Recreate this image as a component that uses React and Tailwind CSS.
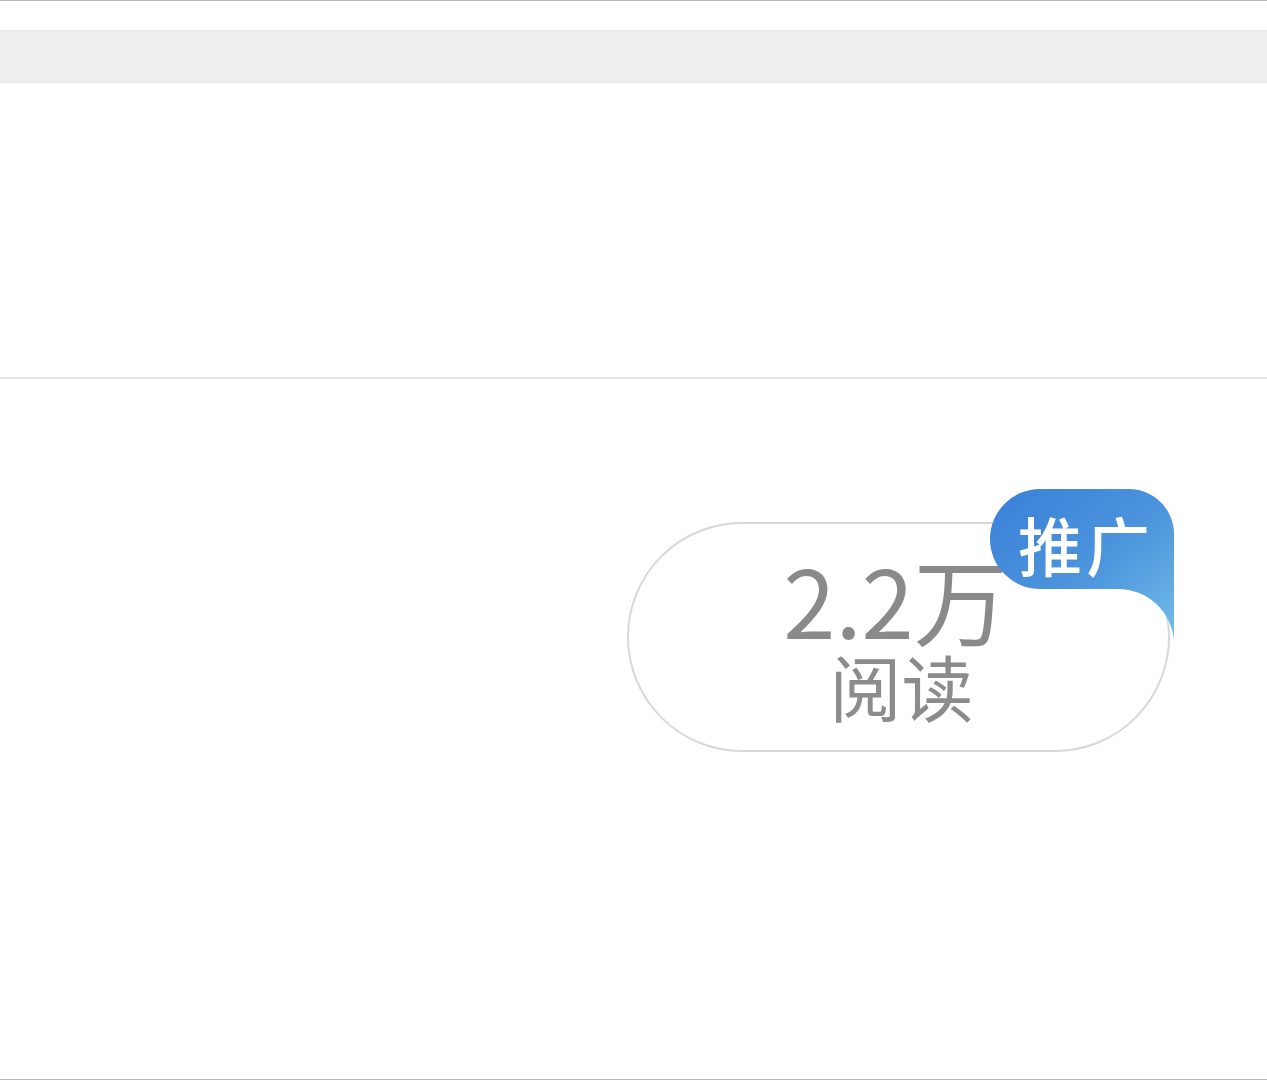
export default function App() {
  return (
    <div
      className="w-full h-[1080px] flex flex-col bg-white border-t border-b border-[#b8b8b8]"
      style={{ fontFamily: '"Noto Sans CJK SC", "Noto Sans", sans-serif' }}
    >
      {/* top spacer + gray band */}
      <div className="h-[29px]" />
      <div className="h-[53px] bg-[#eeeeee] border-t border-b border-[#e8e8e8]" />
      <div className="h-[294px]" />
      <div className="h-[2px] bg-[#e6e6e6]" />

      {/* read count pill */}
      <div className="flex-1 pl-[627px] pt-[143px]">
        <div className="relative w-[543px] h-[230px] rounded-full border-2 border-[#d8d8d8] flex flex-col items-center justify-center pt-[4px]">
          <svg
            className="absolute left-[361px] top-[-35px]"
            width="184"
            height="160"
            viewBox="0 0 184 160"
          >
            <defs>
              <linearGradient id="badge" x1="0" y1="0" x2="1" y2="1">
                <stop offset="0" stopColor="#3a7fd8" />
                <stop offset="0.55" stopColor="#4d95dd" />
                <stop offset="1" stopColor="#72bde8" />
              </linearGradient>
            </defs>
            <path
              d="M 50 0 H 139 A 45 45 0 0 1 184 45 V 152 A 56 56 0 0 0 128 100 H 50 A 50 50 0 0 1 50 0 Z"
              fill="url(#badge)"
            />
          </svg>
          <span className="absolute left-[389px] top-[-31px] text-[64px] leading-[100px] font-medium text-white tracking-[4px]">
            推广
          </span>
          <span className="text-[94px] leading-[82px] text-[#8a8a8a] mr-[6px]">2.2万</span>
          <span className="mt-[10px] text-[72px] leading-[72px] text-[#8c8c8c] ml-[6px]">阅读</span>
        </div>
      </div>
    </div>
  );
}
